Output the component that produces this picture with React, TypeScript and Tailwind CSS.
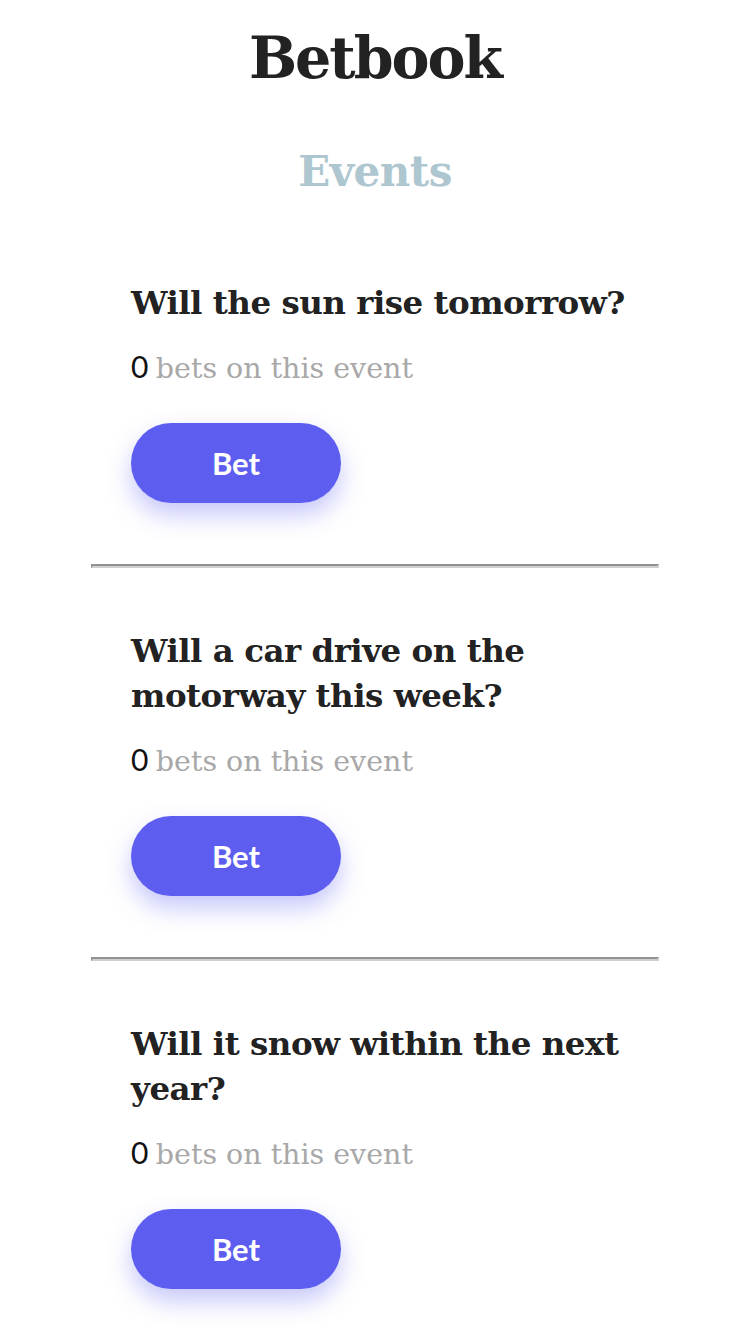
import React from "react";

const slab = { fontFamily: '"DejaVu Serif", "Liberation Serif", serif' };
const lato = { fontFamily: 'Lato, "Liberation Sans", sans-serif' };

const events = [
  "Will the sun rise tomorrow?",
  "Will a car drive on the motorway this week?",
  "Will it snow within the next year?",
];

export default function App() {
  return (
    <div className="min-h-screen bg-white text-[#222]">
      <div className="w-[568px] mx-auto">
        <h1 style={slab} className="text-center font-bold text-[57px] leading-[72px] pt-[22px] text-[#222] tracking-[-2px]">
          Betbook
        </h1>
        <h2 style={slab} className="text-center font-bold text-[42px] leading-[56px] mt-[50px] text-[#adc6d0] tracking-[-0.5px]">
          Events
        </h2>
        <div className="mt-[20px]">
          {events.map((q, i) => (
            <div key={i}>
              {i > 0 && (
                <div className="h-[4px] border-t-2 border-l-2 border-b-2 border-r-2 border-t-[#929292] border-l-[#929292] border-b-[#cfcfcf] border-r-[#cfcfcf]" />
              )}
              <div className="pl-10 pr-4 pt-[60px] pb-[61px]">
                <h3 style={slab} className="font-bold text-[32.5px] leading-[45px] text-[#222] tracking-[-0.5px]">
                  {q}
                </h3>
                <p className="mt-[21px] text-[28.5px] leading-[40px]">
                  <span style={lato} className="text-[#111] text-[30px]">0</span>{" "}
                  <span style={slab} className="text-[#a8a8a8] font-light">bets on this event</span>
                </p>
                <button
                  style={lato}
                  className="mt-[34px] w-[210px] h-[80px] rounded-full bg-[#5d5ef0] text-white font-bold text-[31px] shadow-[0_12px_24px_rgba(93,94,240,0.35)]"
                >
                  Bet
                </button>
              </div>
            </div>
          ))}
        </div>
      </div>
    </div>
  );
}
